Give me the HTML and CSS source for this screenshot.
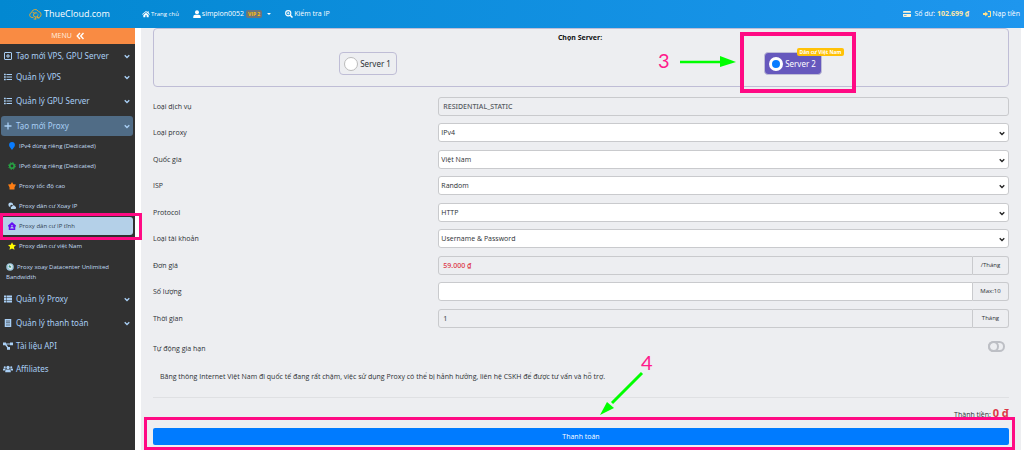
FILE: index.html
```html
<!DOCTYPE html>
<html lang="vi">
<head>
<meta charset="utf-8">
<title>ThueCloud.com</title>
<link rel="stylesheet" href="styles.css">
</head>
<body>
<svg class="defs" aria-hidden="true">
  <symbol id="down" viewBox="0 0 10 8"><path d="M1.2 1.8 5 5.6 8.800 1.800" fill="none" stroke="currentColor" stroke-width="2.200"/></symbol>
  <symbol id="list" viewBox="0 0 16 16"><path d="M0 1.500h3.500v3H0zm0 5h3.500v3H0zm0 5h3.500v3H0zM5 2h11v2H5zm0 5h11v2H5zm0 5h11v2H5z" fill="currentColor"/></symbol>
</svg>
<header class="topbar">
  <a class="brand" href="#">
    <svg class="brand-icon" viewBox="0 0 26 22" fill="none" stroke="#d8a93a" stroke-width="2" stroke-linecap="round"><path d="M8 18H6a5 5 0 0 1-1-9.800A7.500 7.500 0 0 1 19 6a6.200 6.200 0 0 1 1 12h-1"/><path d="M8 8a4 4 0 0 1 4 2M16 9a4.500 4.500 0 1 0 2 3.500M13.500 17v4M10 21h3.500M17 16v3h3"/></svg>
    ThueCloud.com
  </a>
  <nav class="topnav">
    <a class="home" href="#"><svg class="ic8" viewBox="0 0 18 16" fill="currentColor"><path d="M9 1 0 8.500l1.200 1.400L9 3.400l7.800 6.500L18 8.500l-3-2.500V2h-2.500v2zM9 5 3 10v5.500h4.500V11h3v4.500H15V10z"/></svg>Trang chủ</a>
    <button type="button" class="user"><svg class="ic8" viewBox="0 0 16 16" fill="currentColor"><circle cx="8" cy="4.500" r="4"/><path d="M.5 16v-2.500a4 4 0 0 1 4-4h7a4 4 0 0 1 4 4V16z"/></svg>simplon0052<span class="vip">VIP 2</span><span class="caret"></span></button>
    <a href="#"><svg class="ic8" viewBox="0 0 16 16" fill="none" stroke="currentColor"><circle cx="6.500" cy="6.500" r="5.200" stroke-width="2.200"/><path d="m10.500 10.500 4.500 4.500" stroke-width="3"/><path d="M4 6.500h5M6.500 4v5" stroke-width="1.600"/></svg>Kiểm tra IP</a>
  </nav>
  <nav class="account">
    <a href="#"><svg class="ic8" viewBox="0 0 18 16" fill="#fff3d6"><path d="M2 1.500h14a2 2 0 0 1 2 2V5H0V3.500a2 2 0 0 1 2-2zM0 8h18v4.500a2 2 0 0 1-2 2H2a2 2 0 0 1-2-2z"/><path d="M2 11h6v1.300H2z" fill="#1a8fe3"/></svg><span>Số dư: <b>102.699 ₫</b></span></a>
    <a href="#"><svg class="ic8" viewBox="0 0 18 16"><path d="M0 6h5V2.500L11.500 8 5 13.500V10H0z" fill="#ffe08a"/><path d="M11 2h4a2 2 0 0 1 2 2v8a2 2 0 0 1-2 2h-4" fill="none" stroke="#ffe08a" stroke-width="2.600"/></svg>Nạp tiền</a>
  </nav>
</header>
<div class="layout">
  <aside class="sidebar">
    <button type="button" class="menu-toggle">MENU <svg class="ic8" viewBox="0 0 16 16" fill="none" stroke="#fff" stroke-width="2.800"><path d="M8 2 2.500 8 8 14M15 2 9.500 8l5.500 6"/></svg></button>
    <nav class="side">
      <a class="item" href="#"><svg class="ico" viewBox="0 0 16 16" fill="none" stroke="currentColor" stroke-width="2"><rect x="1" y="1" width="14" height="14" rx="1"/><path d="M8 4v8M4 8h8"/></svg><span>Tạo mới VPS, GPU Server</span><svg class="arr"><use href="#down"/></svg></a>
      <a class="item close" href="#"><svg class="ico"><use href="#list"/></svg><span>Quản lý VPS</span><svg class="arr"><use href="#down"/></svg></a>
      <a class="item" href="#"><svg class="ico"><use href="#list"/></svg><span>Quản lý GPU Server</span><svg class="arr"><use href="#down"/></svg></a>
      <a class="item open" href="#"><svg class="ico" viewBox="0 0 16 16" stroke="currentColor" stroke-width="2.600"><path d="M8 1v14M1 8h14"/></svg><span>Tạo mới Proxy</span><svg class="arr"><use href="#down"/></svg></a>
      <div class="subs">
        <a class="sub" href="#"><svg class="ic8" viewBox="0 0 16 16"><path d="M8 0a5.800 5.800 0 0 1 5.800 5.800C13.800 9.500 11 11 8 16 5 11 2.200 9.500 2.200 5.800A5.800 5.800 0 0 1 8 0z" fill="#087cff"/></svg>IPv4 dùng riêng (Dedicated)</a>
        <a class="sub" href="#"><svg class="ic8" viewBox="0 0 16 16" fill="none" stroke="#28a745"><circle cx="8" cy="8" r="4.500" stroke-width="3.200"/><circle cx="8" cy="8" r="6.800" stroke-width="2" stroke-dasharray="2.700 2.640"/></svg>IPv6 dùng riêng (Dedicated)</a>
        <a class="sub" href="#"><svg class="ic8" viewBox="0 0 16 16" fill="#fd7e14"><path d="m8 0 2.500 4.500L16 5l-3 5.500H3L0 5l5.500-.500zM3 10h10v5H3z"/></svg>Proxy tốc độ cao</a>
        <a class="sub" href="#"><svg class="ic8" viewBox="0 0 18 16" fill="#b4d5f2"><path d="M6 0a5.500 5.500 0 0 1 5.500 5.500H9a3 3 0 0 0-3 5A5.200 5.200 0 0 1 6 0zM9.500 15a3 3 0 0 1-.5-6 3.500 3.500 0 0 1 6.500-.500A3.300 3.300 0 0 1 15 15z"/></svg>Proxy dân cư Xoay IP</a>
        <a class="sub current" href="#"><svg class="ic8" viewBox="0 0 16 16"><path d="M8 0 0 7v2h1.500v7h13V9H16V7z" fill="#6610f2"/><circle cx="8" cy="7.500" r="1.700" fill="#b4d0e8"/><path d="M4.500 13c0-4 7-4 7 0z" fill="#b4d0e8"/></svg>Proxy dân cư IP tĩnh<i class="mark mark-item"></i></a>
        <a class="sub" href="#"><svg class="ic8" viewBox="0 0 16 16" fill="#ff0"><path d="m8 .3 2.400 5.100 5.600.700-4.100 3.800 1.100 5.600L8 12.800l-5 2.700 1.100-5.600L0 6.100l5.600-.700z"/></svg>Proxy dân cư việt Nam</a>
        <a class="sub wrap" href="#"><svg class="ic8" viewBox="0 0 16 16"><circle cx="8" cy="8" r="7.500" fill="#9cc7dc"/><path d="M5 3h5l3 4-2 5-3 1-4-5z" fill="#e7eef2"/><path d="M7 4 5 7l3 3 3-2z" fill="#3c9277"/></svg>Proxy xoay Datacenter Unlimited Bandwidth</a>
      </div>
      <a class="item flat" href="#"><svg class="ico" viewBox="0 0 16 16" fill="currentColor"><path d="M0 1h4.500v4H0zm5.500 0H16v4H5.500zM0 6h4.500v4H0zm5.500 0H16v4H5.500zM0 11h4.500v4H0zm5.500 0H16v4H5.500z"/></svg><span>Quản lý Proxy</span><svg class="arr"><use href="#down"/></svg></a>
      <a class="item" href="#"><svg class="ico" viewBox="0 0 16 16"><path d="M1.500 0h13v16h-13z" fill="currentColor"/><path d="M4 4h8M4 7.500h8M4 12h8" stroke="#313131" stroke-width="1.300"/></svg><span>Quản lý thanh toán</span><svg class="arr"><use href="#down"/></svg></a>
      <a class="item single" href="#"><svg class="ico wide" viewBox="0 0 20 16" fill="currentColor"><path d="M0 1h6v2h8V1h6v5.500h-6V5H7l3.500 5H14v5.500H8V11L4.500 6.500H0z"/></svg><span>Tài liệu API</span></a>
      <a class="item single" href="#"><svg class="ico wide" viewBox="0 0 20 16" fill="currentColor"><circle cx="10" cy="5" r="3.300"/><circle cx="3.500" cy="4.500" r="2.100"/><circle cx="16.500" cy="4.500" r="2.100"/><path d="M4.500 14.500V12c0-2 1.500-3 3-3h5c1.500 0 3 1 3 3v2.500zM0 11V9c0-1.300 1-2 2-2h3l1 1c-1.500.800-2.300 1.700-2.500 3zm20 0V9c0-1.300-1-2-2-2h-3l-1 1c1.500.800 2.300 1.700 2.500 3z"/></svg><span>Affiliates</span></a>
    </nav>
  </aside>
  <main class="content">
    <fieldset class="servers">
      <div class="servers-title">Chọn Server:</div>
      <div class="server-grid">
        <label class="server"><input type="radio" name="server">Server 1</label>
        <label class="server chosen"><input type="radio" name="server" checked>Server 2
          <span class="tag">Dân cư Việt Nam</span>
          <i class="mark mark-server"></i>
          <svg class="step step-3" viewBox="0 0 86 24"><text x="0" y="19">3</text><path d="M22 13h42" stroke-width="2.500"/><path d="m62 7 16 6-16 5z" stroke="none"/></svg>
        </label>
      </div>
    </fieldset>
    <form class="form">
      <div class="row"><label for="service">Loại dịch vụ</label><input id="service" class="field" value="RESIDENTIAL_STATIC" readonly></div>
      <div class="row"><label for="type">Loại proxy</label><div class="pick"><select id="type" class="field"><option>IPv4</option></select><svg><use href="#down"/></svg></div></div>
      <div class="row"><label for="country">Quốc gia</label><div class="pick"><select id="country" class="field"><option>Việt Nam</option></select><svg><use href="#down"/></svg></div></div>
      <div class="row"><label for="isp">ISP</label><div class="pick"><select id="isp" class="field"><option>Random</option></select><svg><use href="#down"/></svg></div></div>
      <div class="row"><label for="protocol">Protocol</label><div class="pick"><select id="protocol" class="field"><option>HTTP</option></select><svg><use href="#down"/></svg></div></div>
      <div class="row"><label for="auth">Loại tài khoản</label><div class="pick"><select id="auth" class="field"><option>Username &amp; Password</option></select><svg><use href="#down"/></svg></div></div>
      <div class="row"><label for="price">Đơn giá</label><div class="group"><input id="price" class="field price" value="59.000 ₫" readonly><span class="unit">/Tháng</span></div></div>
      <div class="row"><label for="amount">Số lượng</label><div class="group"><input id="amount" class="field"><span class="unit">Max:10</span></div></div>
      <div class="row"><label for="period">Thời gian</label><div class="group"><input id="period" class="field" value="1" readonly><span class="unit">Tháng</span></div></div>
      <div class="renew"><label for="renew">Tự động gia hạn</label><input id="renew" class="switch" type="checkbox"></div>
      <p class="note">Băng thông Internet Việt Nam đi quốc tế đang rất chậm, việc sử dụng Proxy có thể bị hảnh hưởng, liên hệ CSKH để được tư vấn và hỗ trợ.</p>
      <div class="total">Thành tiền: <b>0 đ</b></div>
      <div class="pay">
        <button type="button">Thanh toán</button>
        <i class="mark mark-pay"></i>
        <svg class="step step-4" viewBox="0 0 60 64"><text x="41" y="19">4</text><path d="M42 22 12 52" stroke-width="3"/><path d="m0 64 7-13 7 6z" stroke="none"/></svg>
      </div>
    </form>
  </main>
</div>
</body>
</html>
```

FILE: styles.css
```css
* { box-sizing: border-box; }
body {
  margin: 0;
  background: #fff;
  color: #2c3034;
  font: 8px/12px "Noto Sans", "Open Sans", sans-serif;
}
a { color: inherit; text-decoration: none; }
button, input, select { font: inherit; color: inherit; margin: 0; }
button { border: 0; padding: 0; background: none; }
.defs { display: none; }
.ic8 { width: 8px; height: 8px; flex: none; }

.topbar {
  display: flex;
  align-items: center;
  height: 28px;
  color: #fff;
  background: linear-gradient(90deg, #0288d1, #1e96ee);
  font-family: "Open Sans", "Noto Sans", sans-serif;
}
.brand { display: flex; align-items: center; gap: 2px; width: 142px; padding-left: 29px; font-size: 9px; }
.brand-icon { width: 13px; height: 12px; }
.topnav, .account { display: flex; }
.topnav a, .account a, .user { display: flex; align-items: center; white-space: nowrap; }
.topnav { font-size: 7px; }
.topnav a { gap: 1px; }
.topnav .home { font-size: 6px; font-weight: 500; }
.user { gap: 1px; margin: 0 14px; }
.vip { margin-left: 1px; padding: 0 2px; border-radius: 2px; background: #6c757d; color: #ffc107; font-size: 5px; line-height: 8px; font-weight: 700; }
.caret { margin-left: 4px; border: 2px solid transparent; border-top-color: #fff; border-bottom: 0; }
.account { margin-left: auto; gap: 14px; padding-right: 4px; font-size: 7px; }
.account a { gap: 3px; }
.account a + a { gap: 1px; }
.account b { color: #ffe8a8; }

.layout { display: flex; align-items: stretch; }
.sidebar { flex: none; width: 135px; min-height: calc(100vh - 28px); background: #313131; color: #a9cff5; }
.menu-toggle { display: flex; align-items: center; justify-content: center; gap: 4px; width: 100%; height: 16px; background: #f98b43; color: #ffe9da; font-size: 7px; }
.side { padding: 2px 2px 0 1px; }
.item { display: flex; align-items: center; gap: 4px; height: 20px; margin-top: 4px; padding: 0 3px; font-size: 8px; }
.item:first-child { margin-top: 0; }
.item.close { margin-top: 1px; }
.item.single { margin-top: 3px; }
.item span { flex: 1; }
.ico { width: 8px; height: 8px; flex: none; }
.ico.wide { width: 10px; margin: 0 -1px; }
.arr { width: 6px; height: 5px; flex: none; }
.item.open { margin-top: 5px; border-radius: 3px; background: #506c86; }
.item.flat { margin-top: 0; }
.subs { padding-bottom: 5px; font-family: "Open Sans", "Noto Sans", sans-serif; }
.sub { display: flex; align-items: center; gap: 3px; height: 18px; margin: 1px 0 2px; padding-left: 7px; border-radius: 3px; font-size: 6px; font-weight: 500; line-height: 10px; color: #c2ddf6; }
.sub.current { position: relative; background: #b4d0e8; color: #30404f; }
.sub.wrap { display: block; height: auto; margin-top: 7px; padding-left: 5px; }
.sub.wrap svg { margin-right: 3px; vertical-align: middle; }

.content { flex: 1; min-width: 0; margin: 0 3px 0 6px; padding: 0 12px; background: #edeef1; }
.servers { margin: 0; min-width: 0; height: 59px; padding: 3px 3px 0 1px; border: 1px solid #bfbdd6; border-radius: 4px; }
.servers-title { text-align: center; color: #111; font-size: 7px; font-weight: 700; }
.server-grid { display: grid; grid-template-columns: 1fr 1fr; justify-items: center; padding-top: 8px; }
.server { position: relative; display: flex; align-items: center; justify-content: center; gap: 2px; width: 58px; height: 23px; border: 1px solid #bfbdd6; border-radius: 4px; white-space: nowrap; }
.server input { appearance: none; width: 14px; height: 14px; border: 1px solid #bbb; border-radius: 50%; background: #fff; }
.server input:checked { border: 3px solid #fff; background: #087cff; }
.chosen { background: #6658bd; color: #fff; }
.tag { position: absolute; top: -5px; right: -23px; padding: 0 2px; border-radius: 2px; background: #ffc107; font-size: 5px; line-height: 8px; font-weight: 700; }

.form { padding-top: 10px; font-family: "Open Sans", "Noto Sans", sans-serif; }
.row { display: grid; grid-template-columns: 1fr 2fr; align-items: center; margin-bottom: 7px; font-size: 7px; }
.row:nth-child(even) { margin-bottom: 8px; }
.field { display: block; width: 100%; min-width: 0; height: 19px; padding: 0 4px; border: 1px solid #c9cacd; border-radius: 3px; background: #fff; }
.field:read-only { background: #edeef1; color: #565b61; font-family: "Noto Sans", sans-serif; font-weight: 500; }
.pick { position: relative; }
.pick .field { appearance: none; padding: 0 2px; background: #fff; color: inherit; font: inherit; }
.pick svg { position: absolute; top: 8px; right: 4px; width: 6px; height: 5px; color: #222; pointer-events: none; }
.group { display: flex; }
.group .field { flex: 1; border-radius: 3px 0 0 3px; }
.group .price { color: #dc3545; }
.unit { width: 36px; border: 1px solid #c9cacd; border-left: 0; border-radius: 0 3px 3px 0; font-size: 6px; line-height: 17px; text-align: center; }
.renew { display: flex; align-items: center; justify-content: space-between; padding: 2px 4px 0 0; height: 26px; font-size: 7px; }
.switch { position: relative; appearance: none; width: 17px; height: 11px; margin-bottom: 5px; border: 2px solid #bdbfc5; border-radius: 6px; }
.switch::before { content: ""; position: absolute; top: -2px; left: -2px; width: 7px; height: 7px; border: 2px solid #bdbfc5; border-radius: 50%; }
.note { margin: 0; padding: 10px 7px 14px; border-bottom: 1px solid #dfe0e3; font-size: 7px; }
.total { padding-top: 7px; text-align: right; font-size: 7px; line-height: 16px; }
.total b { color: #dc3545; font-size: 11px; }
.pay { position: relative; padding: 5px 0; }
.pay button { display: block; width: 100%; height: 17px; border-radius: 2px; background: #007bff; color: #fff; font-size: 7px; }

.mark { position: absolute; border: 3px solid #ff0a84; pointer-events: none; }
.mark-item { inset: -4px -9px -5px -1px; }
.mark-server { inset: -21px -35px -19px -25px; border-width: 4px; }
.mark-pay { inset: -6px -6px 0 -9px; }
.step { position: absolute; overflow: visible; fill: #0f0; stroke: #0f0; pointer-events: none; }
.step text { fill: #ff1a8c; stroke: none; font: 20px Lato, sans-serif; }
.step-3 { top: -4px; left: -107px; width: 86px; height: 24px; }
.step-4 { bottom: 35px; left: calc(50% + 19px); width: 60px; height: 64px; }
```
